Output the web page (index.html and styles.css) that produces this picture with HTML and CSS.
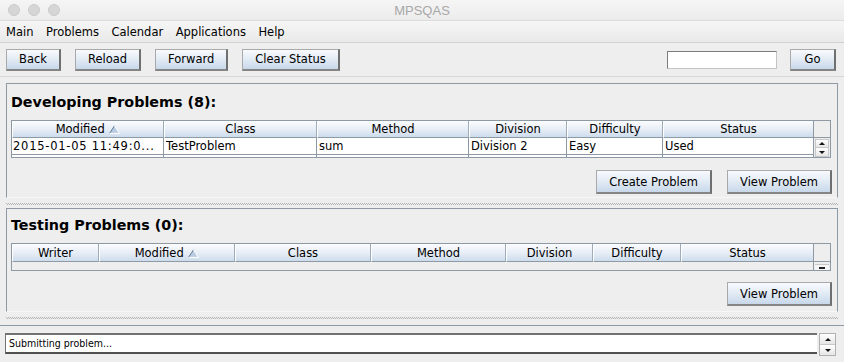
FILE: index.html
```html
<!DOCTYPE html>
<html>
<head>
	<title>MPSQAS</title>
	<link rel="stylesheet" href="styles.css">
</head>
<body>
<div class="window">
	<div class="titlebar">
		<div class="lights">
			<span class="light"></span>
			<span class="light"></span>
			<span class="light"></span>
		</div>
		<div class="title">MPSQAS</div>
		<div></div>
	</div>

	<div class="menubar">
		<span class="menu">Main</span>
		<span class="menu">Problems</span>
		<span class="menu">Calendar</span>
		<span class="menu">Applications</span>
		<span class="menu">Help</span>
	</div>

	<div class="toolbar">
		<button type="button" class="btn">Back</button>
		<button type="button" class="btn">Reload</button>
		<button type="button" class="btn">Forward</button>
		<button type="button" class="btn">Clear Status</button>
		<input type="text" class="search">
		<button type="button" class="btn go">Go</button>
	</div>

	<div class="content">
		<div class="panel dev">
			<h2>Developing Problems (8):</h2>
			<div class="grid">
				<table class="tbl dev-tbl">
					<colgroup>
						<col class="c-mod"><col class="c-class"><col class="c-method"><col class="c-div"><col class="c-diff"><col class="c-status"><col class="c-scroll">
					</colgroup>
					<thead>
						<tr>
							<th>Modified <svg class="sort" width="11" height="9" viewBox="0 0 11 9"><path d="M5.5 0.8 L10.4 8.4 L0.6 8.4 Z" fill="#b9cce1"/><path d="M0.6 8.4 L5.5 0.8" stroke="#5f7892" fill="none"/><path d="M5.5 0.8 L10.4 8.4 L0.6 8.4" stroke="#ffffff" fill="none"/></svg></th>
							<th>Class</th>
							<th>Method</th>
							<th>Division</th>
							<th>Difficulty</th>
							<th class="last">Status</th>
							<th class="corner"></th>
						</tr>
					</thead>
					<tbody>
						<tr>
							<td class="date">2015-01-05 11:49:0...</td>
							<td>TestProblem</td>
							<td>sum</td>
							<td>Division 2</td>
							<td>Easy</td>
							<td class="last">Used</td>
							<td class="vscroll" rowspan="2">
								<span class="arrow-btn"><i class="up"></i></span>
								<span class="arrow-btn"><i class="down"></i></span>
							</td>
						</tr>
						<tr class="peek">
							<td></td><td></td><td></td><td></td><td></td><td class="last"></td>
						</tr>
					</tbody>
				</table>
			</div>
			<div class="actions">
				<button type="button" class="btn big">Create Problem</button>
				<button type="button" class="btn big">View Problem</button>
			</div>
		</div>

		<div class="divider"></div>

		<div class="panel test">
			<h2>Testing Problems (0):</h2>
			<div class="grid">
				<table class="tbl test-tbl">
					<colgroup>
						<col class="c-writer"><col class="c-mod"><col class="c-class"><col class="c-method"><col class="c-div"><col class="c-diff"><col class="c-status"><col class="c-scroll">
					</colgroup>
					<thead>
						<tr>
							<th>Writer</th>
							<th>Modified <svg class="sort" width="11" height="9" viewBox="0 0 11 9"><path d="M5.5 0.8 L10.4 8.4 L0.6 8.4 Z" fill="#b9cce1"/><path d="M0.6 8.4 L5.5 0.8" stroke="#5f7892" fill="none"/><path d="M5.5 0.8 L10.4 8.4 L0.6 8.4" stroke="#ffffff" fill="none"/></svg></th>
							<th>Class</th>
							<th>Method</th>
							<th>Division</th>
							<th>Difficulty</th>
							<th class="last">Status</th>
							<th class="corner"></th>
						</tr>
					</thead>
					<tbody>
						<tr class="empty">
							<td colspan="7"></td>
							<td class="vscroll"><span class="cut-btn"><i></i></span></td>
						</tr>
					</tbody>
				</table>
			</div>
			<div class="actions">
				<button type="button" class="btn big">View Problem</button>
			</div>
		</div>

		<div class="divider low"></div>

		<div class="status">
			<div class="status-text">Submitting problem...</div>
			<div class="status-scroll">
				<span class="arrow-btn"><i class="up"></i></span>
				<span class="arrow-btn"><i class="down"></i></span>
			</div>
		</div>
	</div>
</div>
</body>
</html>
```

FILE: styles.css
```css
* {
	box-sizing: border-box;
}
body {
	margin: 0;
	background: #eeeeee;
	font-family: "DejaVu Sans", "Noto Sans", sans-serif;
	font-size: 11.5px;
	color: #000;
}
.window {
	width: 844px;
	height: 362px;
	overflow: hidden;
	display: flex;
	flex-direction: column;
}

/* title bar */
.titlebar {
	height: 21px;
	display: grid;
	grid-template-columns: 1fr auto 1fr;
	align-items: center;
	background: linear-gradient(#f5f5f5, #ececec);
	border-bottom: 1px solid #dcdcdc;
}
.lights {
	display: flex;
	gap: 8px;
	padding-left: 8px;
}
.light {
	width: 12px;
	height: 12px;
	border-radius: 50%;
	background: #d6d6d6;
	border: 1px solid #cbcbcb;
}
.title {
	font-family: "Liberation Sans", Arial, sans-serif;
	font-size: 13px;
	color: #a8a8a8;
}

/* menu */
.menubar {
	height: 22px;
	display: flex;
	align-items: center;
	background: linear-gradient(#f6f6f6, #e9e9e9);
	border-bottom: 1px solid #d2d2d2;
}
.menu {
	padding: 0 6.5px 0 6px;
}

/* toolbar */
.toolbar {
	height: 34px;
	display: flex;
	align-items: center;
	padding: 0 8px 0 6px;
	border-bottom: 1px solid #d6d6d6;
}
.btn {
	height: 22px;
	padding: 0 12px;
	font: inherit;
	color: #000;
	background: linear-gradient(#f8fafd, #e4ecf5 45%, #c8d8ea);
	border: 1px solid #a9a9a9;
	border-right: 2px solid #6f6f6f;
	border-bottom: 2px solid #858585;
	border-radius: 0;
}
.toolbar .btn + .btn {
	margin-left: 14px;
}
.search {
	width: 110px;
	height: 18px;
	margin-left: auto;
	margin-right: 13px;
	background: #fff;
	border: 1px solid #c4c4c4;
	border-top-color: #7c7c7c;
	border-left-color: #7c7c7c;
}
.toolbar .btn.go {
	width: 46px;
	padding: 0;
	margin-left: 0;
}

/* panels */
.content {
	display: flex;
	flex-direction: column;
}
.panel {
	margin: 6px 6px 0;
	border: 1px solid #8d9aa6;
	border-bottom-color: #f7f7f7;
	padding: 6px 5px 3px 4px;
}
.panel.test {
	margin-top: 0;
	padding-top: 4px;
	padding-bottom: 5px;
}
h2 {
	margin: 0;
	font-size: 14.3px;
	font-weight: bold;
	line-height: 24px;
}
.grid {
	margin: 6px 1px 0 0;
	border: 1px solid #8d9aa6;
	background: #eeeeee;
}
.actions {
	display: flex;
	justify-content: flex-end;
	gap: 15px;
	margin-top: 12px;
}
.test .actions {
	margin-top: 11px;
}
.actions .btn {
	height: 24px;
}

/* tables */
.tbl {
	width: 100%;
	table-layout: fixed;
	border-collapse: separate;
	border-spacing: 0;
}
.tbl th {
	height: 17px;
	padding: 0;
	font-weight: normal;
	text-align: center;
	white-space: nowrap;
	overflow: hidden;
	background: linear-gradient(#fbfcfe, #e8eef6 50%, #cddcec);
	border-left: 1px solid #fff;
	border-right: 1px solid #9eacb9;
	border-bottom: 1px solid #8d9aa6;
}
.test-tbl th {
	height: 18px;
}
.tbl th.last,
.tbl td.last {
	border-right: 0;
}
.tbl th.corner {
	background: #eeeeee;
	border-left: 1px solid #8d9aa6;
	border-right: 0;
}
.sort {
	vertical-align: -1px;
	margin-left: 1px;
}
.tbl td {
	height: 17px;
	padding: 0 0 0 2px;
	background: #fff;
	white-space: nowrap;
	overflow: hidden;
	border-right: 1px solid #8d9aa6;
	border-bottom: 1px solid #8d9aa6;
}
.tbl td.date {
	padding-left: 1px;
	letter-spacing: 0.75px;
}
.tbl .peek td {
	height: 2px;
	border-bottom: 0;
}
.tbl .empty td {
	height: 8px;
	background: #eeeeee;
	border: 0;
}
.tbl td.vscroll {
	padding: 1px 0 0;
	vertical-align: top;
	background: #eeeeee;
	border: 0;
	border-left: 1px solid #8d9aa6;
}
.tbl .empty td.vscroll {
	border-left: 1px solid #8d9aa6;
	vertical-align: bottom;
	padding: 0;
}
.c-mod { width: 152px; }
.c-class { width: 153px; }
.c-method { width: 152px; }
.c-div { width: 98px; }
.c-diff { width: 96px; }
.c-status { width: 150px; }
.c-scroll { width: 17px; }
.test-tbl .c-writer { width: 87px; }
.test-tbl .c-mod { width: 136px; }
.test-tbl .c-class { width: 136px; }
.test-tbl .c-method { width: 135px; }
.test-tbl .c-div { width: 87px; }
.test-tbl .c-diff { width: 88px; }
.test-tbl .c-status { width: 132px; }

/* little scroll arrows */
.arrow-btn {
	display: flex;
	align-items: center;
	justify-content: center;
	height: 9px;
	margin: 0 1px;
	background: linear-gradient(#ffffff, #e6e6e6);
	border: 1px solid #c8c8c8;
}
.arrow-btn + .arrow-btn {
	border-top: 0;
}
.up {
	border-left: 3px solid transparent;
	border-right: 3px solid transparent;
	border-bottom: 3px solid #111;
}
.down {
	border-left: 3px solid transparent;
	border-right: 3px solid transparent;
	border-top: 3px solid #111;
}
.cut-btn {
	display: flex;
	justify-content: center;
	align-items: flex-end;
	height: 6px;
	margin: 0 1px;
	background: #f6f6f6;
	border-top: 1px solid #c8c8c8;
}
.cut-btn i {
	width: 6px;
	height: 2px;
	margin-bottom: 1px;
	background: #222;
}

/* split dividers */
.divider {
	height: 10px;
	margin: 0 6px;
	background-image: linear-gradient(90deg, #b3b3b3 50%, transparent 50%), linear-gradient(90deg, transparent 50%, #b3b3b3 50%);
	background-size: 2px 1px, 2px 1px;
	background-repeat: repeat-x;
	background-position: 0 5px, 0 6px;
}
.divider.low {
	height: 13px;
}

/* status line */
.status {
	display: flex;
	gap: 2px;
	border-top: 1px solid #8d9aa6;
	padding: 7px 8px 0 5px;
}
.status-text {
	flex: 1;
	height: 21px;
	padding-left: 3px;
	background: #fff;
	border-top: 2px solid #727272;
	border-left: 1px solid #727272;
	border-bottom: 2px solid #505050;
	font-family: "DejaVu Sans Condensed", "DejaVu Sans", sans-serif;
	font-stretch: condensed;
	font-size: 10.5px;
	line-height: 17px;
}
.status-scroll {
	width: 17px;
	height: 23px;
	display: flex;
	flex-direction: column;
	border: 1px solid #b0b0b0;
}
.status-scroll .arrow-btn {
	height: 11px;
	margin: 0;
	border: 0;
}
.status-scroll .arrow-btn + .arrow-btn {
	border-top: 1px solid #c8c8c8;
}
```
